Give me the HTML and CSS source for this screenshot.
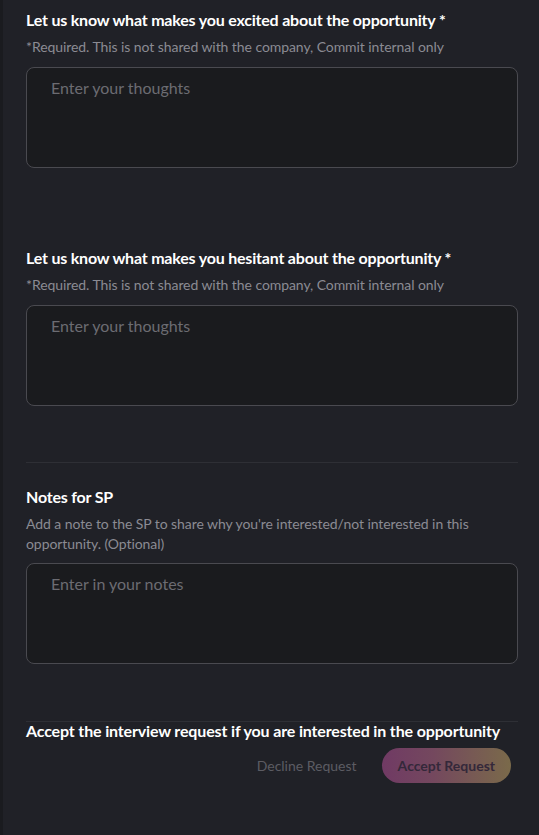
FILE: index.html
```html
<!DOCTYPE html>
<html lang="en">
<head>
<meta charset="utf-8">
<link rel="stylesheet" href="styles.css">
</head>
<body>
<div class="page">
  <section class="field first">
    <h2 class="label">Let us know what makes you excited about the opportunity *</h2>
    <p class="hint">*Required. This is not shared with the company, Commit internal only</p>
    <textarea class="box" placeholder="Enter your thoughts"></textarea>
  </section>
  <section class="field second">
    <h2 class="label">Let us know what makes you hesitant about the opportunity *</h2>
    <p class="hint">*Required. This is not shared with the company, Commit internal only</p>
    <textarea class="box" placeholder="Enter your thoughts"></textarea>
  </section>
  <hr class="divider">
  <section class="field notes">
    <h2 class="label">Notes for SP</h2>
    <p class="hint">Add a note to the SP to share why you're interested/not interested in this opportunity. (Optional)</p>
    <textarea class="box" placeholder="Enter in your notes"></textarea>
  </section>
  <footer class="footer">
    <hr class="divider">
    <h3 class="footer-title">Accept the interview request if you are interested in the opportunity</h3>
    <div class="actions">
      <button class="btn decline" type="button">Decline Request</button>
      <button class="btn accept" type="button">Accept Request</button>
    </div>
  </footer>
</div>
</body>
</html>
```

FILE: styles.css
```css
* { box-sizing: border-box; }
html, body {
  margin: 0;
  padding: 0;
  background: #1a1b1f;
  height: 100%;
}
body {
  font-family: Lato, "Noto Sans", sans-serif;
  color: #ffffff;
}
.page {
  margin-left: 3px;
  min-height: 835px;
  background: #202127;
  padding: 10px 21px 0 23px;
  display: flex;
  flex-direction: column;
}
.field {
  display: flex;
  flex-direction: column;
}
.second { margin-top: 80px; }
.label {
  margin: 0;
  font-size: 16px;
  line-height: 20px;
  font-weight: 700;
  letter-spacing: -0.2px;
  color: #ffffff;
}
.hint {
  margin: 7px 0 0;
  font-size: 14px;
  line-height: 20px;
  letter-spacing: -0.07px;
  color: #8b8b93;
}
.box {
  display: block;
  margin-top: 10px;
  height: 101px;
  width: 100%;
  resize: none;
  background: #1a1b1e;
  border: 1px solid #4a4a50;
  border-radius: 8px;
  padding: 10px 24px;
  font-family: Lato, "Noto Sans", sans-serif;
  font-size: 16px;
  line-height: 20px;
  color: #ffffff;
  outline: none;
}
.box::placeholder { color: #6c6c72; }
.divider {
  border: 0;
  height: 1px;
  background: #2e2f35;
  margin: 0;
  width: 100%;
}
.page > .divider { margin-top: 56px; }
.notes { margin-top: 24px; }
.notes .box { margin-top: 9px; }
.footer {
  margin-top: 57px;
}
.footer-title {
  margin: 0;
  font-size: 16px;
  line-height: 18px;
  font-weight: 700;
  letter-spacing: -0.15px;
  color: #ffffff;
}
.actions {
  display: flex;
  justify-content: flex-end;
  align-items: center;
  gap: 25px;
  margin-top: 8px;
  padding-right: 7px;
}
.btn {
  font-family: Lato, "Noto Sans", sans-serif;
  font-size: 14px;
  border: 0;
  cursor: pointer;
}
.decline {
  background: transparent;
  color: #5c5c63;
  padding: 0;
}
.accept {
  height: 35px;
  padding: 0 16px;
  border-radius: 18px;
  background: linear-gradient(90deg, #703a64 0%, #74485e 40%, #7a6a4a 100%);
  color: #34283a;
  font-weight: 700;
}
```
